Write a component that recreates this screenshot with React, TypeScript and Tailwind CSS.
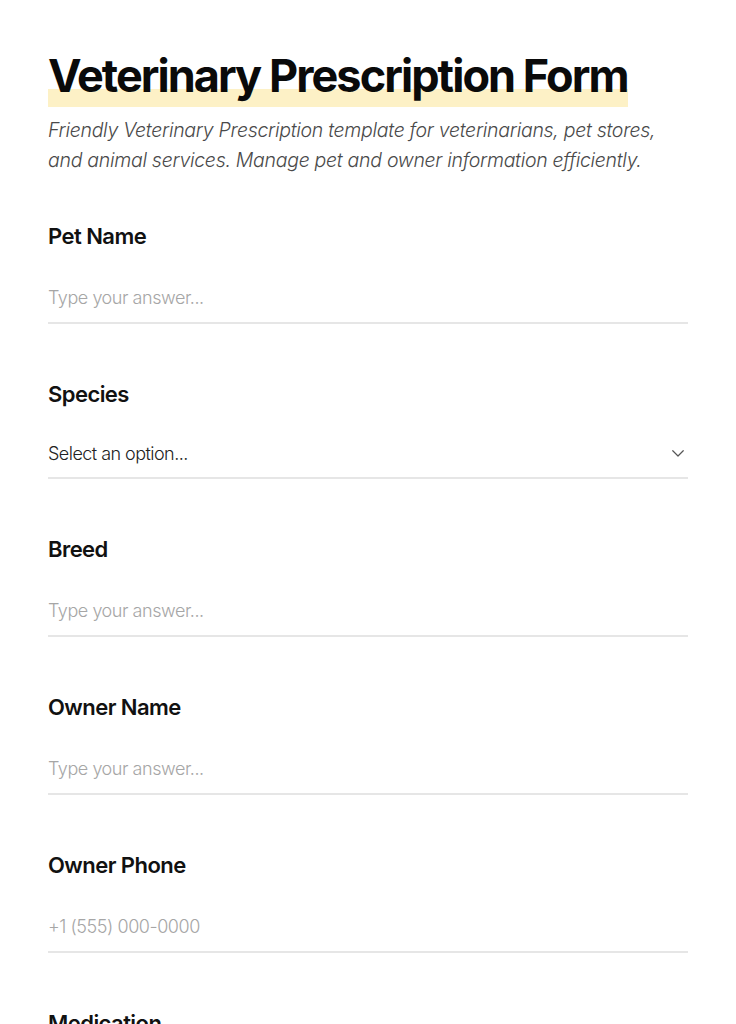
import React from 'react';

const font = { fontFamily: 'Inter, "Noto Sans", sans-serif' };

function TextField({ label, placeholder }: { label: string; placeholder: string }) {
  return (
    <div className="flex flex-col pb-[55px]">
      <label className="text-[22px] leading-[30px] font-semibold tracking-[-0.025em] text-[#111]">{label}</label>
      <input
        type="text"
        placeholder={placeholder}
        className="mt-[21px] h-[52px] w-full border-b-2 border-[#e6e6e6] bg-transparent text-[18px] tracking-[-0.025em] text-[#222] outline-none placeholder:text-[#a6a6a6] placeholder:font-light"
      />
    </div>
  );
}

function SelectField({ label }: { label: string }) {
  return (
    <div className="flex flex-col pb-[55px]">
      <label className="text-[22px] leading-[30px] font-semibold tracking-[-0.025em] text-[#111]">{label}</label>
      <div className="mt-[20px] flex h-[50px] w-full items-center justify-between border-b-2 border-[#e6e6e6]">
        <span className="text-[18px] font-light tracking-[-0.03em] text-[#222]">Select an option...</span>
        <svg width="18" height="18" viewBox="0 0 24 24" fill="none" stroke="#555" strokeWidth="1.6" strokeLinecap="round" strokeLinejoin="round" className="mr-[1px]">
          <path d="M5 9l7 7 7-7" />
        </svg>
      </div>
    </div>
  );
}

export default function App() {
  return (
    <div className="min-h-screen bg-white" style={font}>
      <div className="px-12 pt-[48px]">
        <h1 className="text-[45px] leading-[56px] font-bold tracking-[-0.043em] text-[#0a0a0a]">
          <span className="bg-[linear-gradient(to_bottom,transparent_70%,#fdf1c6_70%,#fdf1c6_100%)] pb-[4px]">
            Veterinary Prescription Form
          </span>
        </h1>
        <p className="mt-[11px] text-[19.5px] leading-[30px] italic font-light tracking-[-0.015em] text-[#4a4a4a]">
          Friendly Veterinary Prescription template for veterinarians, pet stores, and animal services. Manage pet and owner information efficiently.
        </p>
        <div className="mt-[46px] flex flex-col">
          <TextField label="Pet Name" placeholder="Type your answer..." />
          <SelectField label="Species" />
          <TextField label="Breed" placeholder="Type your answer..." />
          <TextField label="Owner Name" placeholder="Type your answer..." />
          <TextField label="Owner Phone" placeholder="+1 (555) 000-0000" />
          <TextField label="Medication" placeholder="Type your answer..." />
        </div>
      </div>
    </div>
  );
}
